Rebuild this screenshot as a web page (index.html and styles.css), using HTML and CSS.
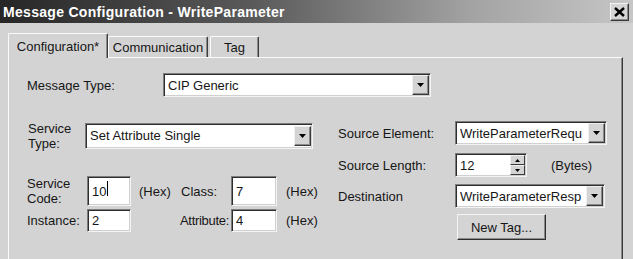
FILE: index.html
```html
<!DOCTYPE html>
<html lang="en">
<head>
    <meta charset="UTF-8">
    <title>Message Configuration - WriteParameter</title>
    <link rel="stylesheet" href="styles.css">
</head>
<body>
    <div class="window">
        <div class="titlebar">
            <span class="title">Message Configuration - WriteParameter</span>
            <span class="close">
                <svg width="11" height="10" viewBox="0 0 11 10"><path d="M1 1 L10 9 M10 1 L1 9" stroke="#000" stroke-width="2.4" fill="none"/></svg>
            </span>
        </div>

        <div class="tabs">
            <div class="tab active">Configuration*</div>
            <div class="tab comm">Communication</div>
            <div class="tab tag">Tag</div>
        </div>

        <div class="panel">
            <div class="row msg-row">
                <span class="lbl msg-lbl">Message Type:</span>
                <div class="field combo msg-combo">
                    <span class="val">CIP Generic</span>
                    <span class="drop"><svg width="7" height="4" viewBox="0 0 7 4"><path d="M0 0 H7 L3.5 4 Z" fill="#000"/></svg></span>
                </div>
            </div>

            <div class="cols">
                <!-- left side: service -->
                <div class="left">
                    <div class="row svc-type">
                        <span class="lbl two">Service<br>Type:</span>
                        <div class="field combo svc-combo">
                            <span class="val">Set Attribute Single</span>
                            <span class="drop"><svg width="7" height="4" viewBox="0 0 7 4"><path d="M0 0 H7 L3.5 4 Z" fill="#000"/></svg></span>
                        </div>
                    </div>
                    <div class="grid-row code-row">
                        <span class="lbl two">Service<br>Code:</span>
                        <div class="field small"><span class="val">10</span><span class="caret"></span></div>
                        <span class="unit">(Hex)</span>
                        <span class="lbl">Class:</span>
                        <div class="field small"><span class="val">7</span></div>
                        <span class="unit">(Hex)</span>
                    </div>
                    <div class="grid-row inst-row">
                        <span class="lbl">Instance:</span>
                        <div class="field small"><span class="val">2</span></div>
                        <span></span>
                        <span class="lbl attr">Attribute:</span>
                        <div class="field small"><span class="val">4</span></div>
                        <span class="unit">(Hex)</span>
                    </div>
                </div>

                <!-- right side: source / destination -->
                <div class="right">
                    <div class="row">
                        <span class="lbl r-lbl">Source Element:</span>
                        <div class="field combo r-combo">
                            <span class="val">WriteParameterRequ</span>
                            <span class="drop"><svg width="7" height="4" viewBox="0 0 7 4"><path d="M0 0 H7 L3.5 4 Z" fill="#000"/></svg></span>
                        </div>
                    </div>
                    <div class="row len-row">
                        <span class="lbl r-lbl">Source Length:</span>
                        <div class="field spin">
                            <span class="val">12</span>
                            <span class="spin-btns">
                                <span class="sbtn"><svg width="5" height="3" viewBox="0 0 5 3"><path d="M0 3 H5 L2.5 0 Z" fill="#000"/></svg></span>
                                <span class="sbtn"><svg width="5" height="3" viewBox="0 0 5 3"><path d="M0 0 H5 L2.5 3 Z" fill="#000"/></svg></span>
                            </span>
                        </div>
                        <span class="bytes">(Bytes)</span>
                    </div>
                    <div class="row dest-row">
                        <span class="lbl r-lbl">Destination</span>
                        <div class="field combo r-combo dest-combo">
                            <span class="val">WriteParameterResp</span>
                            <span class="drop"><svg width="7" height="4" viewBox="0 0 7 4"><path d="M0 0 H7 L3.5 4 Z" fill="#000"/></svg></span>
                        </div>
                    </div>
                    <button class="btn">New Tag...</button>
                </div>
            </div>
        </div>
    </div>
</body>
</html>
```

FILE: styles.css
```css
* {
    margin: 0;
    padding: 0;
    box-sizing: border-box;
    font-family: 'Liberation Sans', Arial, sans-serif;
}

body {
    width: 633px;
    height: 259px;
    overflow: hidden;
    background-color: #d3d3d3;
    color: #161616;
    font-size: 13px;
}

/* Title bar */
.titlebar {
    height: 23px;
    display: flex;
    align-items: center;
    justify-content: space-between;
    padding: 0 4px 0 3px;
    background: linear-gradient(to right, #262626 0%, #5a5a5a 40%, #a4a4a4 75%, #c6c6c6 100%);
}

.title {
    color: #ffffff;
    font-weight: bold;
    font-size: 14px;
    letter-spacing: 0.3px;
}

.close {
    width: 19px;
    height: 18px;
    margin-top: 1px;
    display: flex;
    align-items: center;
    justify-content: center;
    background-color: #d4d4d4;
    border: 1px solid;
    border-color: #f4f4f4 #3a3a3a #3a3a3a #f4f4f4;
    box-shadow: inset -1px -1px 0 #8a8a8a;
}

/* Tabs */
.tabs {
    display: flex;
    align-items: flex-end;
    margin-top: 10px;
    padding-left: 8px;
    height: 24px;
}

.tab {
    height: 21px;
    padding-top: 3px;
    text-align: center;
    background-color: #d3d3d3;
    border: 1px solid;
    border-bottom: none;
    border-color: #fafafa #3c3c3c #3c3c3c #fafafa;
    box-shadow: inset -1px 0 0 #8a8a8a;
    border-radius: 2px 2px 0 0;
}

.tab.active {
    width: 100px;
    height: 25px;
    padding-top: 5px;
    position: relative;
    z-index: 1;
    margin-bottom: -1px;
}

.tab.comm {
    width: 100px;
}

.tab.tag {
    width: 49px;
    margin-left: 2px;
}

/* Panel */
.panel {
    margin-left: 8px;
    width: 615px;
    height: 210px;
    border-top: 1px solid #fafafa;
    border-left: 1px solid #fafafa;
    border-right: 1px solid #3a3a3a;
    box-shadow: inset -1px 0 0 #8a8a8a;
    padding-left: 18px;
}

.row {
    display: flex;
    align-items: center;
}

.lbl {
    white-space: nowrap;
    line-height: 15px;
}

.msg-row {
    margin-top: 15px;
    height: 24px;
}

.msg-lbl {
    width: 136px;
}

/* Sunken fields */
.field {
    position: relative;
    height: 24px;
    background-color: #ffffff;
    border: 1px solid;
    border-color: #7c7c7c #f4f4f4 #f4f4f4 #7c7c7c;
    box-shadow: inset 1px 1px 0 #2e2e2e, inset -1px -1px 0 #d0d0d0;
    display: flex;
    align-items: center;
    padding-left: 4px;
}

.val {
    flex: 1;
    white-space: nowrap;
    overflow: hidden;
}

.caret {
    position: absolute;
    left: 19px;
    top: 4px;
    width: 1px;
    height: 15px;
    background-color: #000;
}

.drop {
    width: 17px;
    height: 20px;
    margin-right: 1px;
    display: flex;
    align-items: center;
    justify-content: center;
    background-color: #d4d4d4;
    border: 1px solid;
    border-color: #f0f0f0 #3a3a3a #3a3a3a #f0f0f0;
    box-shadow: inset -1px -1px 0 #8a8a8a;
}

.msg-combo {
    width: 268px;
}

.cols {
    display: flex;
    margin-top: 24px;
}

.left {
    width: 311px;
}

.svc-type {
    margin-top: 1px;
    height: 27px;
}

.svc-type .lbl {
    width: 58px;
    padding-left: 1px;
}

.svc-combo {
    width: 228px;
    height: 26px;
}

.grid-row {
    display: grid;
    grid-template-columns: 60px 44px 50px 50px 46px auto;
    align-items: center;
}

.code-row {
    margin-top: 27px;
    height: 24px;
}

.inst-row {
    margin-top: 9px;
    height: 23px;
}

.field.small {
    height: 100%;
}

.unit {
    padding-left: 8px;
}

.grid-row .unit:last-child {
    padding-left: 9px;
}

.attr {
    margin-left: -1px;
    letter-spacing: -0.3px;
}

/* Right side */
.r-lbl {
    width: 117px;
}

.r-combo {
    width: 152px;
    height: 24px;
}

.dest-combo {
    width: 150px;
}

.len-row {
    margin-top: 8px;
}

.spin {
    width: 72px;
}

.spin-btns {
    width: 15px;
    height: 20px;
    margin-right: 1px;
    display: flex;
    flex-direction: column;
}

.sbtn {
    flex: 1;
    display: flex;
    align-items: center;
    justify-content: center;
    background-color: #d4d4d4;
    border: 1px solid;
    border-color: #f0f0f0 #3a3a3a #3a3a3a #f0f0f0;
}

.bytes {
    margin-left: 24px;
}

.dest-row {
    margin-top: 7px;
}

.btn {
    margin: 6px 0 0 119px;
    width: 89px;
    height: 26px;
    font-size: 13px;
    color: #161616;
    background-color: #d4d4d4;
    border: 1px solid;
    border-color: #f4f4f4 #2e2e2e #2e2e2e #f4f4f4;
    box-shadow: inset -1px -1px 0 #8a8a8a;
}
```
